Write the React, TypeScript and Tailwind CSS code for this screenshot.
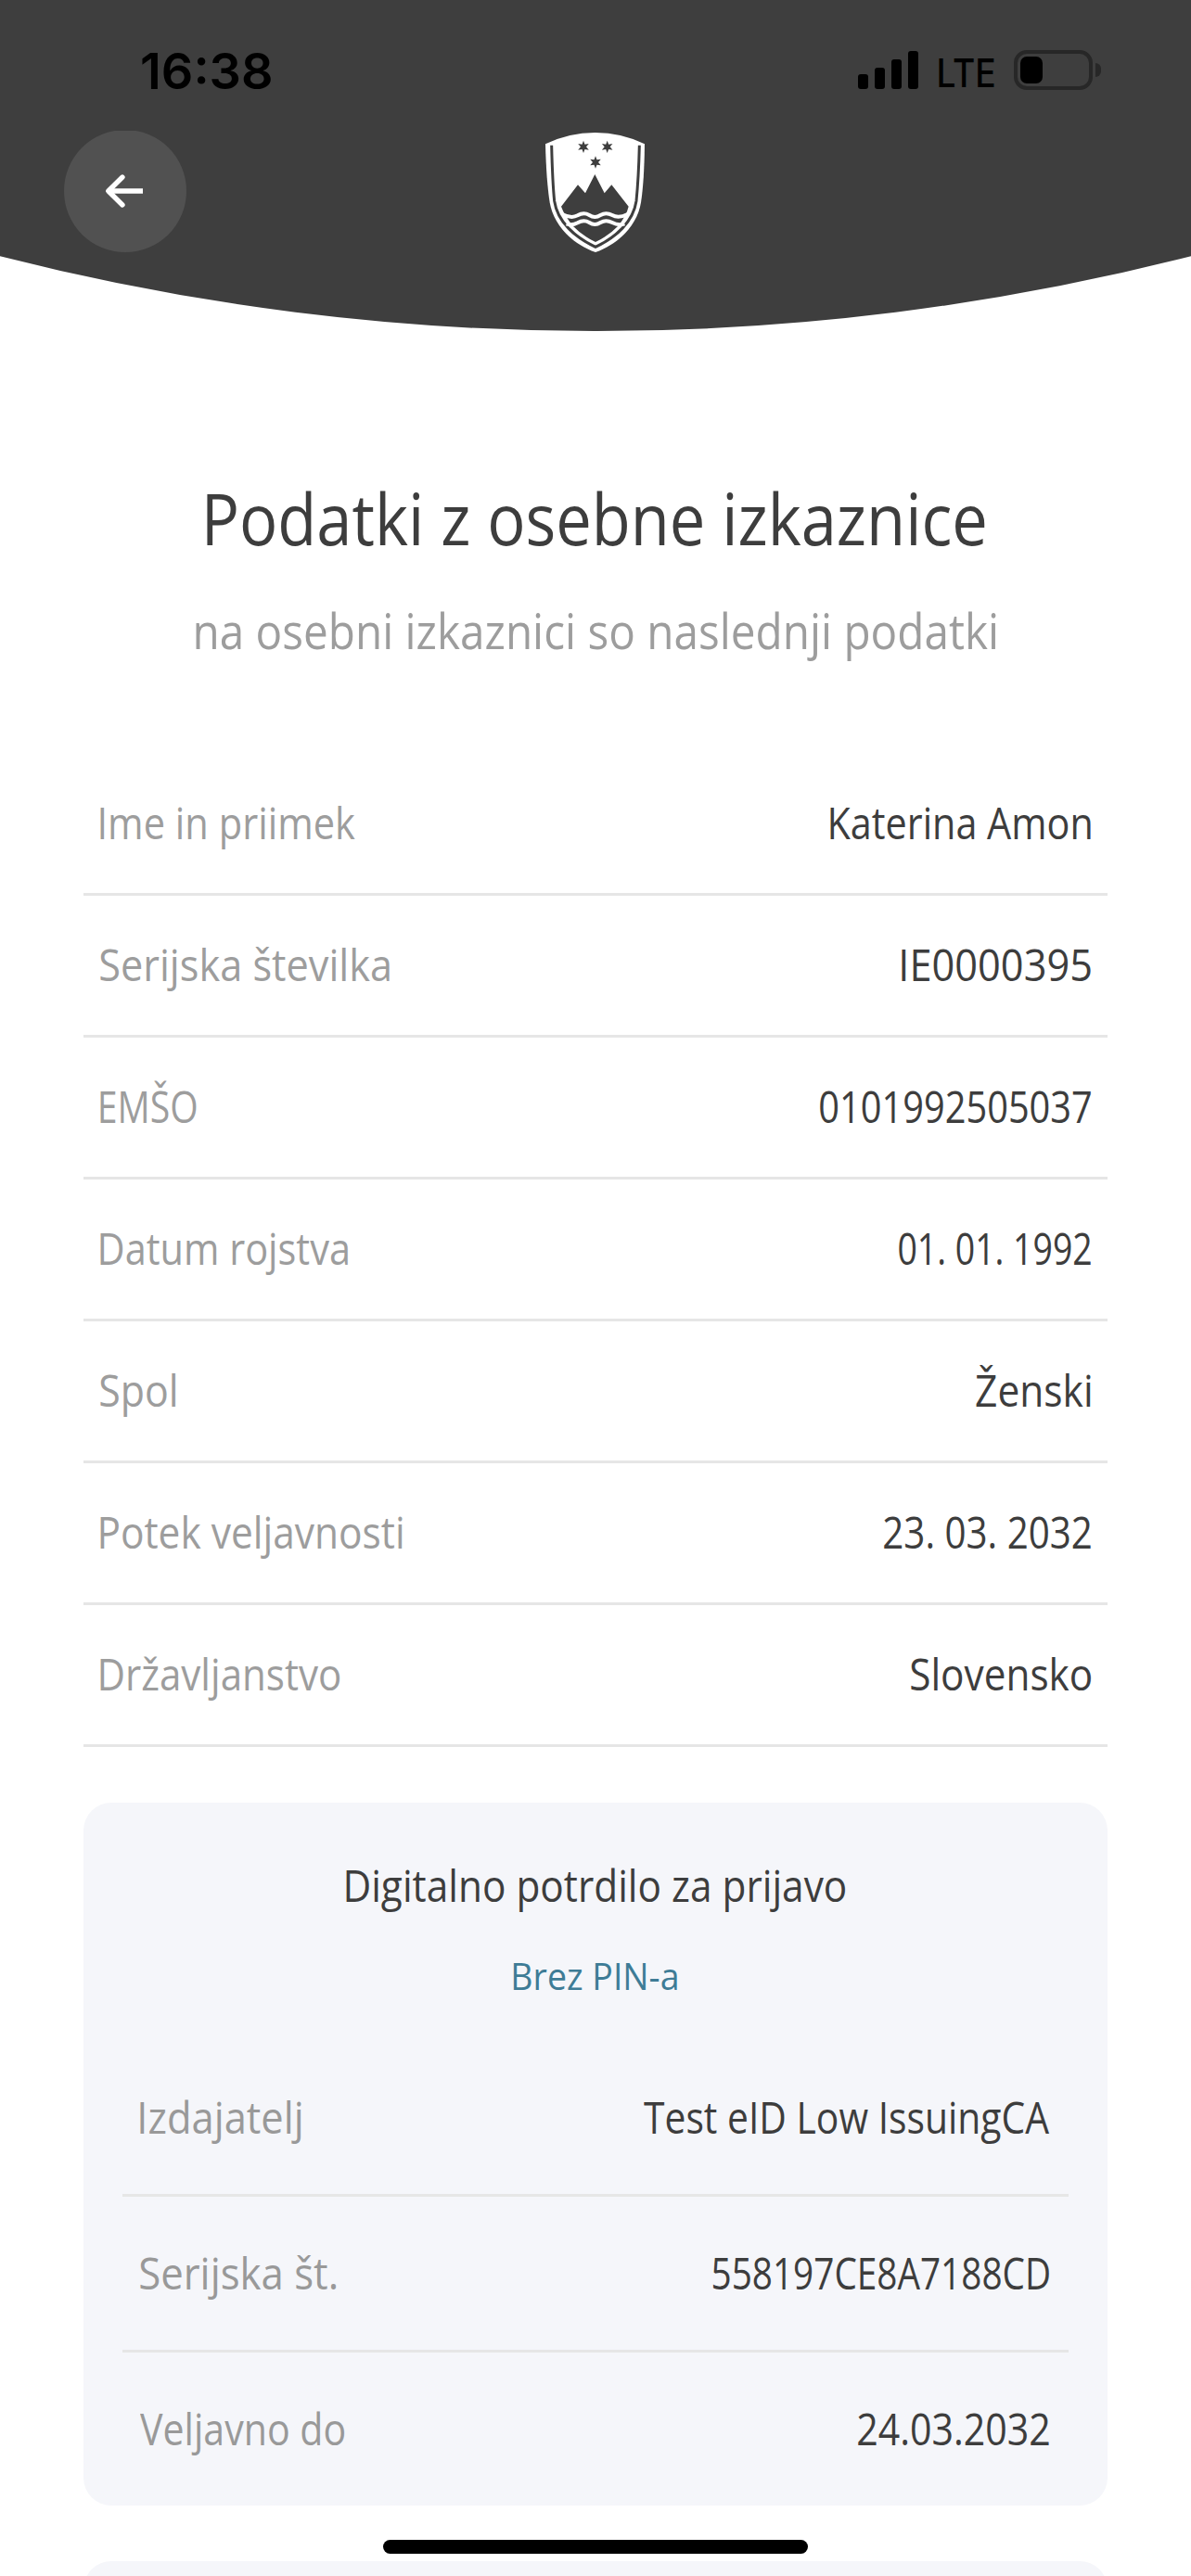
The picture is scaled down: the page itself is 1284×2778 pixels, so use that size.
import { useLayoutEffect, useRef } from "react";

type RowData = {
  label: string;
  labelWidth: number;
  value: string;
  valueWidth: number;
};

const personalData: RowData[] = [
  { label: "Ime in priimek", labelWidth: 275, value: "Katerina Amon", valueWidth: 281 },
  { label: "Serijska številka", labelWidth: 312, value: "IE0000395", valueWidth: 204 },
  { label: "EMŠO", labelWidth: 104, value: "0101992505037", valueWidth: 292 },
  { label: "Datum rojstva", labelWidth: 267, value: "01. 01. 1992", valueWidth: 207 },
  { label: "Spol", labelWidth: 81, value: "Ženski", valueWidth: 124 },
  { label: "Potek veljavnosti", labelWidth: 326, value: "23. 03. 2032", valueWidth: 223 },
  { label: "Državljanstvo", labelWidth: 258, value: "Slovensko", valueWidth: 194 },
];

const certificateData: RowData[] = [
  { label: "Izdajatelj", labelWidth: 174, value: "Test eID Low IssuingCA", valueWidth: 437 },
  { label: "Serijska št.", labelWidth: 211, value: "558197CE8A7188CD", valueWidth: 362 },
  { label: "Veljavno do", labelWidth: 220, value: "24.03.2032", valueWidth: 206 },
];

// Condenses a line of text so that its glyphs fill exactly `width` pixels
const FitText = ({ text, width }: { text: string; width: number }) => {
  const ref = useRef<HTMLSpanElement>(null);

  useLayoutEffect(() => {
    const el = ref.current;
    const ctx = document.createElement("canvas").getContext("2d");
    if (!el || !ctx) return;
    const style = getComputedStyle(el);
    ctx.font = `${style.fontWeight} ${style.fontSize} ${style.fontFamily}`;
    const { actualBoundingBoxLeft: left, actualBoundingBoxRight: right } = ctx.measureText(text);
    el.style.transform = `scaleX(${width / (left + right)}) translateX(${left}px)`;
  }, [text, width]);

  return (
    <span className="block" style={{ width }}>
      <span ref={ref} className="inline-block origin-left whitespace-nowrap">
        {text}
      </span>
    </span>
  );
};

const StatusBar = () => (
  <div className="flex h-[141px] items-start justify-between pr-[97px] pl-[153px]">
    <div className="mt-[45px] font-['Inter',sans-serif] text-[54px] leading-[64px] font-semibold text-black">
      <FitText text="16:38" width={139} />
    </div>
    <div className="mt-[54px] flex items-start">
      <div className="flex h-[42px] items-end gap-[7px]">
        <div className="h-[16px] w-[11px] rounded-[3px] bg-black" />
        <div className="h-[23px] w-[11px] rounded-[3px] bg-black" />
        <div className="h-[32px] w-[11px] rounded-[3px] bg-black" />
        <div className="h-[41px] w-[11px] rounded-[3px] bg-black" />
      </div>
      <div className="ml-[22px] font-['Inter',sans-serif] text-[43px] leading-[48px] font-medium text-black">
        <FitText text="LTE" width={60} />
      </div>
      <div className="ml-[21px] flex h-[43px] w-[85px] items-center rounded-[14px] border-4 border-[#272727] pl-[3px]">
        <div className="h-[29px] w-[24px] rounded-[7px] bg-black" />
      </div>
      <div className="mt-[14px] ml-[3px] h-[15px] w-[6px] rounded-r-full bg-[#272727]" />
    </div>
  </div>
);

const STAR = "0,-20 4.5,-8 17.3,-10 9,0 17.3,10 4.5,8 0,20 -4.5,8 -17.3,10 -9,0 -17.3,-10 -4.5,-8";

const CoatOfArms = () => (
  <svg viewBox="81 66 330 396" className="mt-[1px] h-[132px] w-[110px]">
    <path
      fill="#fff"
      d="M84 106Q160 69 245 69Q330 69 405 106C404 190 400 250 393 295C382 365 325 428 246 456C166 428 110 365 98 295C91 250 86 190 84 106Z"
    />
    <path
      fill="none"
      stroke="#3e3e3e"
      strokeWidth="9"
      d="M104 110C106 190 109 250 113 290C123 358 180 408 246 439C312 408 368 358 378 290C382 250 386 190 388 110"
    />
    <g fill="#3e3e3e">
      <polygon points={STAR} transform="translate(207 115)" />
      <polygon points={STAR} transform="translate(284 115)" />
      <polygon points={STAR} transform="translate(246 165)" />
      <path d="M135 308L189 238L213 265L244 204L275 265L298 238L353 308Q346 338 318 372Q290 402 246 423Q202 402 174 372Q146 338 135 308Z" />
    </g>
    <g fill="none" stroke="#fff" strokeWidth="12">
      <path d="M138 333Q168 348 188 337Q208 325 226 336Q244 348 262 336Q280 325 300 336Q320 348 350 333" />
      <path d="M152 364Q170 371 188 361Q208 349 226 360Q244 372 262 360Q280 349 300 360Q320 371 340 364" />
    </g>
  </svg>
);

const Header = () => (
  <header className="relative h-[357px]">
    <svg viewBox="0 0 1284 357" className="absolute inset-0 h-[357px] w-[1284px]">
      <path fill="#3e3e3e" d="M0 0H1284V276.3A2594 2594 0 0 1 0 276.3Z" />
    </svg>
    <div className="relative">
      <StatusBar />
      <div className="grid h-[132px] grid-cols-3 overflow-hidden px-[69px]">
        <button className="-mt-[1px] flex h-[132px] w-[132px] items-center justify-center rounded-full bg-[#515151]">
          <svg viewBox="0 0 44 36" className="mr-[3px] h-[36px] w-[44px]">
            <g fill="none" stroke="#fff" strokeWidth="5.3" strokeLinejoin="round">
              <path d="M4 18H42" />
              <path strokeLinecap="round" d="M20 3L4.8 18L20 33" />
            </g>
          </svg>
        </button>
        <div className="flex justify-center">
          <CoatOfArms />
        </div>
      </div>
    </div>
  </header>
);

const App = () => {
  return (
    <div className="relative h-[2778px] w-[1284px] overflow-hidden bg-white font-['Open_Sans','Noto_Sans',sans-serif] text-[#3d3d3d]">
      <Header />

      <h1 className="mt-[150px] flex h-[104px] justify-center text-[77px] leading-[104px]">
        <FitText text="Podatki z osebne izkaznice" width={839} />
      </h1>
      <p className="mt-[33px] flex h-[72px] justify-center text-[53px] leading-[72px] text-[#9d9d9d]">
        <FitText text="na osebni izkaznici so naslednji podatki" width={863} />
      </p>

      {/* Personal data */}
      <div className="mt-[97px] px-[90px] text-[47.5px] leading-[66px]">
        {personalData.map((row) => (
          <div
            key={row.label}
            className="flex h-[153px] items-center justify-between border-b-[3px] border-[#e6e6e6] pr-[18px] pb-[3px] pl-[18px]"
          >
            <span className="text-[#9d9d9d]">
              <FitText text={row.label} width={row.labelWidth} />
            </span>
            <FitText text={row.value} width={row.valueWidth} />
          </div>
        ))}
      </div>

      {/* Login certificate */}
      <div className="mx-[90px] mt-[60px] h-[758px] rounded-[30px] bg-[#f5f6fa] px-[42px] pt-[56px] text-[47.5px] leading-[66px]">
        <h2 className="flex justify-center">
          <FitText text="Digitalno potrdilo za prijavo" width={538} />
        </h2>
        <p className="mt-[36px] flex justify-center text-[41px] leading-[56px] text-[#3e7c96]">
          <FitText text="Brez PIN-a" width={176} />
        </p>
        <div className="mt-[43px]">
          {certificateData.map((row) => (
            <div
              key={row.label}
              className="flex h-[168px] items-center justify-between border-b-[3px] border-[#e6e6e6] pr-[21px] pb-[1px] pl-[19px] last:border-transparent"
            >
              <span className="text-[#999999]">
                <FitText text={row.label} width={row.labelWidth} />
              </span>
              <FitText text={row.value} width={row.valueWidth} />
            </div>
          ))}
        </div>
      </div>

      {/* Top edge of the next card */}
      <div className="mx-[90px] mt-[60px] h-[200px] rounded-[30px] bg-[#f5f6fa]" />

      {/* Home indicator */}
      <div className="absolute bottom-[24px] left-[413px] h-[15px] w-[458px] rounded-full bg-black" />
    </div>
  );
};

export default App;
